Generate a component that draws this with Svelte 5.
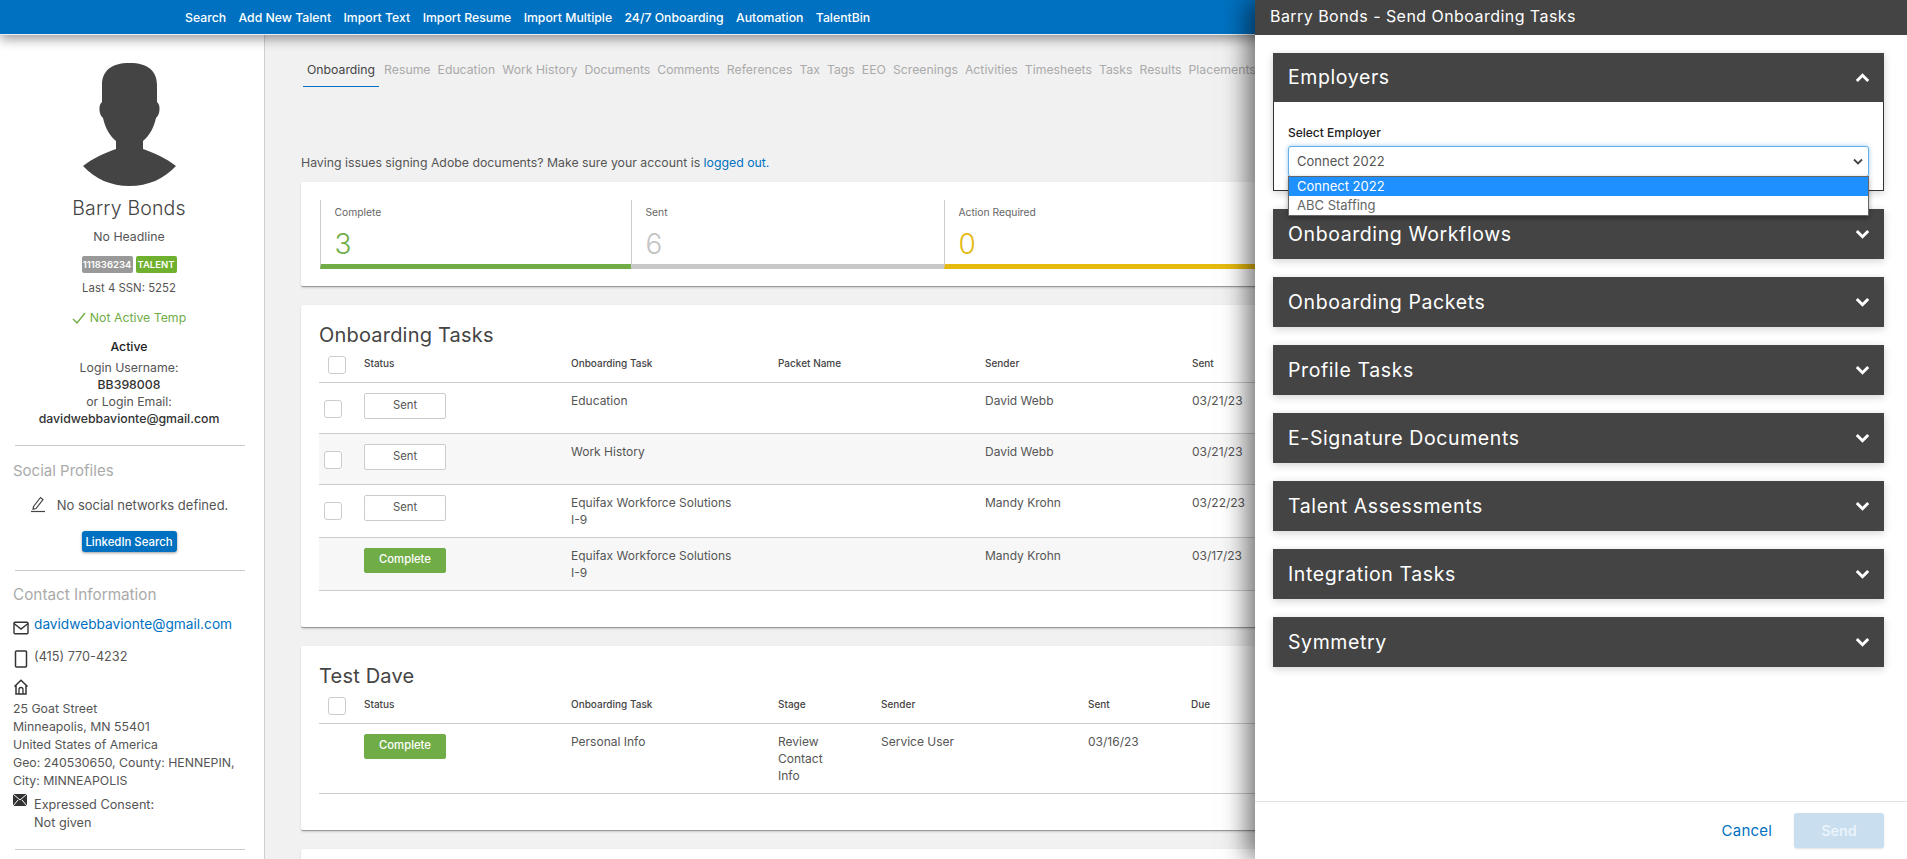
<script>
  const nav = ['Search', 'Add New Talent', 'Import Text', 'Import Resume', 'Import Multiple', '24/7 Onboarding', 'Automation', 'TalentBin'];
  const tabs = ['Resume', 'Education', 'Work History', 'Documents', 'Comments', 'References', 'Tax', 'Tags', 'EEO', 'Screenings', 'Activities', 'Timesheets', 'Tasks', 'Results', 'Placements'];
  const stats = [
    { label: 'Complete', value: '3', cls: 'green' },
    { label: 'Sent', value: '6', cls: 'grey' },
    { label: 'Action Required', value: '0', cls: 'yellow' }
  ];
  const rows = [
    { check: true, status: 'Sent', task: ['Education'], sender: 'David Webb', sent: '03/21/23', cls: 'r1' },
    { check: true, status: 'Sent', task: ['Work History'], sender: 'David Webb', sent: '03/21/23', cls: 'r2 alt' },
    { check: true, status: 'Sent', task: ['Equifax Workforce Solutions', 'I-9'], sender: 'Mandy Krohn', sent: '03/22/23', cls: 'r3' },
    { check: false, status: 'Complete', task: ['Equifax Workforce Solutions', 'I-9'], sender: 'Mandy Krohn', sent: '03/17/23', cls: 'r3 alt' }
  ];
  const sections = ['Onboarding Workflows', 'Onboarding Packets', 'Profile Tasks', 'E-Signature Documents', 'Talent Assessments', 'Integration Tasks', 'Symmetry'];
</script>

<div class="page">
  <header class="topbar">
    <nav class="topnav">
      {#each nav as n}<span>{n}</span>{/each}
    </nav>
  </header>

  <div class="body">
    <aside class="side">
      <svg class="avatar" viewBox="0 0 93 123" width="93" height="123"><path fill="#444" d="M46.5 0C28 0 19 8 19 22L19 39C15 42 16 52 20 55C22 64 26 72 33 78L33 86C22 90 10 95 0 103C12 116 28 123 46.5 123C65 123 81 116 93 103C83 95 71 90 60 86L60 78C67 72 71 64 73 55C77 52 78 42 74 39L74 22C74 8 65 0 46.5 0Z"/></svg>
      <div class="name">Barry Bonds</div>
      <div class="headline">No Headline</div>
      <div class="badges"><span class="badge gb">111836234</span><span class="badge tb">TALENT</span></div>
      <div class="ssn">Last 4 SSN: 5252</div>
      <div class="temp">
        <svg viewBox="0 0 14 12" width="14" height="12"><path d="M1 7l4 4 8-10" fill="none" stroke="#70ad47" stroke-width="1.4"/></svg>
        Not Active Temp
      </div>
      <div class="active">Active</div>
      <div class="login">Login Username:<br><span class="m">BB398008</span><br>or Login Email:<br><span class="m">davidwebbavionte@gmail.com</span></div>
      <hr class="h1">
      <h4 class="sh">Social Profiles</h4>
      <div class="social">
        <svg viewBox="0 0 16 18" width="16" height="18"><path d="M3.5 11.5L10.5 2.5l2.5 2-7 9-3 .8z" fill="none" stroke="#444" stroke-width="1.2"/><path d="M1 16.5h14" stroke="#444" stroke-width="1.2"/></svg>
        <span>No social networks defined.</span>
      </div>
      <button class="li">LinkedIn Search</button>
      <hr class="h2">
      <h4 class="sh c">Contact Information</h4>
      <div class="ci mail">
        <svg viewBox="0 0 16 14" width="16" height="14"><rect x="1" y="1.2" width="14" height="11.6" rx="1" fill="none" stroke="#333" stroke-width="1.4"/><path d="M1 2.5l7 5.5 7-5.5" fill="none" stroke="#333" stroke-width="1.4"/></svg>
        <a href="#m">davidwebbavionte@gmail.com</a>
      </div>
      <div class="ci phone">
        <svg viewBox="0 0 16 18" width="16" height="18"><rect x="2.5" y="1" width="11" height="16" rx="1" fill="none" stroke="#333" stroke-width="1.5"/></svg>
        <span>(415) 770-4232</span>
      </div>
      <svg class="home" viewBox="0 0 16 16" width="16" height="16"><path d="M1.5 7.5L8 1.2l6.5 6.3M3 6v9h10V6" fill="none" stroke="#333" stroke-width="1.5"/><path d="M6 15v-4.5a2 2 0 0 1 4 0V15" fill="none" stroke="#333" stroke-width="1.3"/></svg>
      <div class="addr">25 Goat Street<br>Minneapolis, MN 55401<br>United States of America<br>Geo: 240530650, County: HENNEPIN,<br>City: MINNEAPOLIS</div>
      <div class="consent">
        <svg viewBox="0 0 14 12" width="14" height="12"><rect width="14" height="12" fill="#333"/><path d="M0 0l7 6 7-6M0 12l5-6M14 12l-5-6" fill="none" stroke="#fff" stroke-width="1"/></svg>
        <span>Expressed Consent:<br>Not given</span>
      </div>
      <hr class="h3">
    </aside>

    <main class="main">
      <div class="tabs">
        <span class="tab on">Onboarding</span>
        {#each tabs as t}<span class="tab">{t}</span>{/each}
      </div>
      <p class="issue">Having issues signing Adobe documents? Make sure your account is <a href="#l">logged out.</a></p>

      <section class="card stats">
        {#each stats as s}
          <div class="stat {s.cls}">
            <div class="lab">{s.label}</div>
            <div class="val">{s.value}</div>
          </div>
        {/each}
      </section>

      <section class="card tasks">
        <h2>Onboarding Tasks</h2>
        <div class="grid head">
          <span class="cb hcb"></span><b>Status</b><b>Onboarding Task</b><b>Packet Name</b><b>Sender</b><b>Sent</b>
        </div>
        {#each rows as r}
          <div class="grid row {r.cls}">
            {#if r.check}<span class="cb rcb"></span>{:else}<span></span>{/if}
            <span class="btn {r.status === 'Sent' ? 'sent' : 'done'}">{r.status}</span>
            <span class="t">{#each r.task as l}<span class="ln">{l}</span>{/each}</span>
            <span class="t"></span>
            <span class="t">{r.sender}</span>
            <span class="t">{r.sent}</span>
          </div>
        {/each}
      </section>

      <section class="card tasks dave">
        <h2>Test Dave</h2>
        <div class="grid2 head">
          <span class="cb hcb"></span><b>Status</b><b>Onboarding Task</b><b>Stage</b><b>Sender</b><b>Sent</b><b>Due</b>
        </div>
        <div class="grid2 row rd">
          <span></span>
          <span class="btn done">Complete</span>
          <span class="t">Personal Info</span>
          <span class="t"><span class="ln">Review</span><span class="ln">Contact</span><span class="ln">Info</span></span>
          <span class="t">Service User</span>
          <span class="t">03/16/23</span>
          <span class="t"></span>
        </div>
      </section>

      <section class="card last"></section>
    </main>
  </div>

  <aside class="panel">
    <div class="ptitle">Barry Bonds - Send Onboarding Tasks</div>
    <div class="pbody">
      <div class="acc open">
        <div class="ah"><span>Employers</span><svg viewBox="0 0 15 10" width="15" height="10"><path d="M1.8 8L7.5 2.3 13.2 8" fill="none" stroke="#fff" stroke-width="3"/></svg></div>
        <div class="ab">
          <div class="sl">Select Employer</div>
          <div class="select">
            <span>Connect 2022</span>
            <svg viewBox="0 0 10 7" width="10" height="7"><path d="M1 1.5l4 4 4-4" fill="none" stroke="#444" stroke-width="1.8"/></svg>
            <div class="opts">
              <div class="opt sel">Connect 2022</div>
              <div class="opt">ABC Staffing</div>
            </div>
          </div>
        </div>
      </div>
      {#each sections as s}
        <div class="acc">
          <div class="ah"><span>{s}</span><svg viewBox="0 0 15 10" width="15" height="10"><path d="M1.8 2L7.5 7.7 13.2 2" fill="none" stroke="#fff" stroke-width="3"/></svg></div>
        </div>
      {/each}
    </div>
    <footer class="pfoot">
      <a class="cancel" href="#c">Cancel</a>
      <button class="send">Send</button>
    </footer>
  </aside>
</div>

<style>
  :global(body) { margin: 0; background: #f1f1f1; overflow: hidden; }
  .page { position: relative; width: 1907px; height: 859px; overflow: hidden; font-family: Inter, "Noto Sans", sans-serif; color: #555; font-size: 12.3px; }
  .topbar { height: 34px; background: #0071c1; border-bottom: 1px solid #e8f0f6; box-shadow: 0 4px 12px rgba(0,0,0,.4); position: relative; z-index: 2; display: flex; align-items: center; }
  .topnav { margin-left: 185px; display: flex; gap: 12.4px; color: #fff; font-size: 12.25px; font-weight: 500; }
  .body { display: flex; height: 824px; }

  .side { width: 265px; flex: none; background: #fff; border-right: 1px solid #d0d0d0; box-sizing: border-box; padding-right: 6px; display: flex; flex-direction: column; align-items: center; text-align: center; }
  .avatar { margin-top: 28px; flex: none; }
  .name { margin-top: 7px; font-size: 19.5px; line-height: 30px; font-weight: 300; color: #444; letter-spacing: .15px; }
  .headline { margin-top: 5px; line-height: 17px; }
  .badges { margin-top: 11px; display: flex; gap: 3px; }
  .badge { height: 17px; line-height: 17px; border-radius: 2px; color: #fff; font-size: 9.5px; font-weight: 600; box-sizing: border-box; }
  .gb { width: 51px; background: #999; }
  .tb { width: 41px; background: #6fb02f; }
  .ssn { margin-top: 7px; line-height: 17px; font-size: 11.4px; }
  .temp { margin-top: 12px; line-height: 17px; color: #70ad47; display: flex; gap: 4px; align-items: center; }
  .active { margin-top: 12px; line-height: 17px; color: #222; font-weight: 500; }
  .login { margin-top: 4px; line-height: 17px; }
  .m { color: #333; font-weight: 500; }
  hr { align-self: stretch; margin: 0 13px 0 15px; border: 0; border-top: 1px solid #ccc; flex: none; }
  .h1 { margin-top: 18px; }
  .sh { align-self: flex-start; margin: 0 0 0 13px; font-size: 15px; font-weight: 400; color: #aaa; line-height: 22px; }
  .h1 + .sh { margin-top: 14px; }
  .social { margin-top: 15px; display: flex; align-items: center; gap: 11px; line-height: 17px; font-size: 13px; }
  .social svg { margin-top: -4px; }
  .li { margin-top: 17px; width: 95px; height: 21px; padding: 0; border: 0; border-radius: 3px; background: #0071c1; color: #fff; font: 500 11.4px Inter, sans-serif; box-shadow: 0 1px 3px rgba(0,0,0,.4); }
  .h2 { margin-top: 18px; }
  .sh.c { margin-top: 13px; font-size: 15.3px; }
  .ci { align-self: flex-start; margin-left: 13px; display: flex; gap: 5px; line-height: 17px; }
  .ci svg { flex: none; }
  .mail { margin-top: 10px; font-size: 13.7px; }
  .mail svg { margin-top: 5px; }
  .mail a { color: #0071c1; text-decoration: none; }
  .phone { margin-top: 13px; font-size: 12.7px; }
  .phone svg { margin-top: 2px; }
  .home { align-self: flex-start; margin: 11px 0 0 13px; flex: none; }
  .addr { align-self: flex-start; margin: 4.5px 0 0 13px; text-align: left; line-height: 18px; white-space: nowrap; }
  .consent { align-self: flex-start; margin: 3px 0 0 13px; display: flex; gap: 7px; text-align: left; line-height: 18px; font-size: 12.7px; }
  .consent svg { flex: none; margin-top: 1px; }
  .consent span { margin-top: 3px; }
  .h3 { margin-top: 17px; }

  .main { flex: 1; min-width: 0; padding-left: 36px; overflow: hidden; }
  .tabs { display: flex; height: 52px; gap: 7px; margin-left: 2px; padding-top: 0; white-space: nowrap; }
  .tab { padding-top: 27px; color: #aaa; font-size: 12.25px; line-height: 16px; box-sizing: border-box; height: 52px; }
  .tab.on { color: #444; padding: 27px 4px 0; border-bottom: 1px solid #0071c1; margin-right: -2px; }
  .issue { margin: 67px 0 10px; line-height: 18px; color: #555; }
  .issue a { color: #0071c1; text-decoration: none; }
  .card { background: #fff; width: 1590px; border-radius: 2px; border-bottom: 1px solid #999; box-shadow: 0 1px 2px rgba(0,0,0,.15); box-sizing: border-box; }
  .stats { height: 105px; padding: 18px 0 0 18.5px; display: flex; margin-bottom: 18px; }
  .stat { width: 313px; height: 69px; border-left: 1px solid #ccc; box-sizing: border-box; padding-left: 14px; border-bottom: 5px solid; position: relative; }
  .stat.green { width: 311px; border-bottom-color: #70ad47; }
  .stat.grey { border-bottom-color: #c8c8c8; }
  .stat.yellow { border-bottom-color: #e6b90f; }
  .lab { margin-top: 5px; font-size: 10.3px; line-height: 15px; color: #666; }
  .val { margin-top: 8px; font-size: 28px; line-height: 32px; font-weight: 300; }
  .green .val { color: #70ad47; }
  .grey .val { color: #c4c4c4; }
  .yellow .val { color: #e6b90f; }

  .tasks { height: 323px; padding: 17px 0 0 18px; margin-bottom: 18px; }
  .tasks.dave { height: 185px; }
  h2 { margin: 0; height: 21px; font-size: 20px; font-weight: 400; line-height: 26px; color: #444; letter-spacing: .2px; }
  .grid { display: grid; grid-template-columns: 45px repeat(5, 207px); }
  .grid2 { display: grid; grid-template-columns: 45px 207px 207px 103px 207px 103px 207px; }
  .head { height: 40px; border-bottom: 1px solid #ccc; box-sizing: border-box; }
  .head b { font-size: 10px; font-weight: 500; color: #444; padding-top: 13px; line-height: 14px; }
  .cb { display: block; width: 16px; height: 16px; border: 1px solid #ccc; border-radius: 3px; background: #fff; }
  .hcb { margin: 13px 0 0 9px; }
  .rcb { margin: 17px 0 0 5px; }
  .row { border-bottom: 1px solid #ccc; box-sizing: border-box; }
  .r1 { height: 51px; }
  .r2 { height: 51px; }
  .r3 { height: 53px; }
  .alt { background: #f7f7f7; }
  .rd { height: 70px; }
  .btn { display: block; width: 82px; height: 26px; margin-top: 10px; line-height: 23px; text-align: center; box-sizing: border-box; border: 1px solid #ccc; border-radius: 2px; background: #fff; color: #555; font-size: 11.3px; }
  .done { background: #70ad47; border-color: #70ad47; color: #fff; height: 25px; font-weight: 500; line-height: 21px; }
  .t { padding-top: 9px; line-height: 17px; white-space: nowrap; font-size: 12px; }
  .ln { display: block; }

  .last { height: 100px; padding: 0; }

  .panel { position: absolute; top: 0; right: 0; width: 652px; height: 859px; background: #fff; z-index: 5; box-shadow: -8px 0 24px rgba(0,0,0,.55); display: flex; flex-direction: column; }
  .ptitle { height: 35px; line-height: 33px; padding-left: 15px; background: #444; color: #fff; font-size: 16px; letter-spacing: .45px; font-weight: 400; flex: none; }
  .pbody { flex: 1; padding: 18px 23px 0 18px; display: flex; flex-direction: column; gap: 18px; min-height: 0; }
  .acc { box-shadow: 0 2px 8px rgba(0,0,0,.18); flex: none; }
  .ah { height: 50px; background: #444; color: #fff; display: flex; align-items: center; justify-content: space-between; padding: 0 14px 0 15px; font-size: 19.5px; letter-spacing: .6px; }
  .ah span { margin-top: -1px; }
  .open .ah { height: 49px; }
  .ab { height: 89px; border: 1px solid #333; border-top: 0; box-sizing: border-box; background: #fff; padding: 23px 14px 0; }
  .sl { font-size: 12px; font-weight: 500; color: #222; line-height: 16px; }
  .select { position: relative; margin-top: 5px; height: 31px; box-sizing: border-box; border: 1px solid #66afe9; border-radius: 3px; box-shadow: 0 0 4px rgba(102,175,233,.7); display: flex; align-items: center; justify-content: space-between; padding: 0 5px 1px 8px; background: #fff; }
  .select > span { font-size: 13px; color: #555; }
  .opts { position: absolute; left: -1px; right: -1px; top: 29px; border: 1px solid #666; box-shadow: 0 2px 5px rgba(0,0,0,.35); background: #fff; z-index: 3; }
  .opt { height: 19px; line-height: 19px; padding-left: 8px; font-size: 13px; color: #666; }
  .opt.sel { background: #1e90ff; color: #fff; }
  .pfoot { flex: none; height: 57px; border-top: 1px solid #e2e2e2; display: flex; justify-content: flex-end; align-items: center; gap: 22px; padding: 0 23px 0 0; }
  .cancel { color: #0071c1; text-decoration: none; font-size: 15px; letter-spacing: .2px; }
  .send { width: 90px; height: 35px; border: 0; border-radius: 3px; background: #c9dff0; color: #eef5fb; font: 500 14.5px Inter, sans-serif; padding: 0; margin-top: 0; box-shadow: 0 1px 2px rgba(0,0,0,.12); }
</style>
